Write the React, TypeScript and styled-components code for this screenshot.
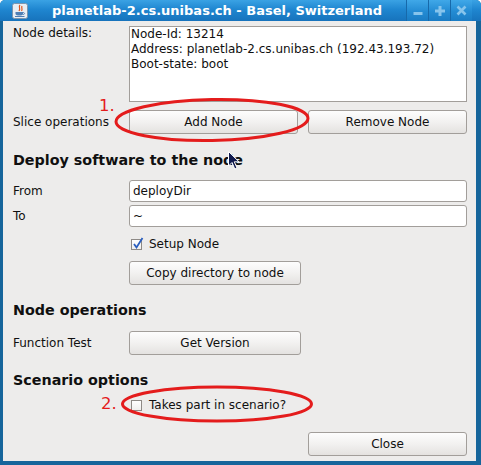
import styled, { createGlobalStyle } from 'styled-components';

const GlobalStyle = createGlobalStyle`
  html, body { margin: 0; padding: 0; background: #ffffff; }
  body { font-family: 'DejaVu Sans', 'Liberation Sans', sans-serif; font-size: 12px; color: #101010; }
`;

const Frame = styled.div`
  position: relative;
  width: 481px;
  height: 465px;
  background: #16659b;
  border-radius: 5px 5px 0 0;
  display: flex;
  flex-direction: column;
  overflow: hidden;
`;

const TitleBar = styled.div`
  height: 21px;
  flex: none;
  display: flex;
  align-items: stretch;
  background: linear-gradient(#3aa2e4 0%, #1f86d0 45%, #1773bc 100%);
  padding-left: 12px;
  padding-right: 9px;
`;

const AppIcon = styled.div`
  width: 16px;
  display: flex;
  align-items: center;
`;

const Title = styled.div`
  flex: 1;
  display: flex;
  align-items: center;
  justify-content: center;
  color: #ffffff;
  font-weight: bold;
  font-size: 13px;
  white-space: nowrap;
`;

const WinButtons = styled.div`
  display: flex;
`;

const WinButton = styled.div`
  width: 21px;
  display: flex;
  align-items: center;
  justify-content: center;
  background: linear-gradient(#40a8e8, #238bd3 55%, #1a7cc4);
  border-left: 1px solid #1769aa;
  color: #86c4ec;
`;

const Body = styled.div`
  flex: 1;
  margin: 0 5px 4px 3px;
  background: #edeceb;
  padding: 5px 9px 0 10px;
  display: flex;
  flex-direction: column;
`;

const Row = styled.div<{ $top?: number; $align?: string }>`
  display: grid;
  grid-template-columns: 116px 1fr;
  align-items: ${(p) => p.$align ?? 'center'};
  margin-top: ${(p) => p.$top ?? 0}px;
`;

const Label = styled.div`
  white-space: nowrap;
  line-height: 15px;
`;

const Details = styled.div`
  height: 74px;
  background: #ffffff;
  border: 1px solid #a29e9a;
  padding: 0 1px;
  line-height: 15px;
  white-space: nowrap;
`;

const Heading = styled.div<{ $top: number }>`
  font-weight: bold;
  font-size: 14.3px;
  line-height: 18px;
  margin-top: ${(p) => p.$top}px;
  white-space: nowrap;
`;

const Buttons = styled.div`
  display: flex;
  gap: 10px;
`;

const Button = styled.button<{ $w: number }>`
  width: ${(p) => p.$w}px;
  height: 24px;
  padding: 0;
  font-family: inherit;
  font-size: 12px;
  color: #101010;
  border: 1px solid #a29e9a;
  border-radius: 3px;
  background: linear-gradient(#fdfdfd, #f2f1f0 50%, #e4e2e0);
`;

const Field = styled.div`
  height: 20px;
  background: #ffffff;
  border: 1px solid #a29e9a;
  border-radius: 3px;
  padding-left: 3px;
  display: flex;
  align-items: center;
`;

const CheckRow = styled.label`
  display: flex;
  align-items: center;
  gap: 7px;
  line-height: 16px;
  padding-left: 2px;
`;

const Box = styled.span`
  width: 9px;
  height: 9px;
  border: 1px solid #8e8a86;
  background: linear-gradient(#ffffff, #f0efee);
  position: relative;
  display: inline-block;
  margin-top: 1px;
`;

const Tick = styled.svg`
  position: absolute;
  left: 0;
  top: -3px;
`;

const Footer = styled.div`
  display: flex;
  justify-content: flex-end;
  margin-top: 19px;
`;

const Marks = styled.svg`
  position: absolute;
  left: 0;
  top: 0;
  pointer-events: none;
`;

const Number = styled.span<{ $x: number; $y: number }>`
  position: absolute;
  left: ${(p) => p.$x}px;
  top: ${(p) => p.$y}px;
  font-size: 16.5px;
  line-height: 16.5px;
  color: #e41c1c;
`;

const Cursor = styled.svg`
  position: absolute;
  left: 228px;
  top: 151px;
`;

function CheckBox({ checked }: { checked?: boolean }) {
  return (
    <Box>
      {checked && (
        <Tick width="13" height="13" viewBox="0 0 13 13">
          <path d="M2 7 L4.5 10.5 L10.5 1" fill="none" stroke="#2b5fbf" strokeWidth="1.8" />
        </Tick>
      )}
    </Box>
  );
}

export default function App() {
  return (
    <>
      <GlobalStyle />
      <Frame>
        <TitleBar>
          <AppIcon>
            <svg width="16" height="16" viewBox="0 0 16 16">
              <rect x="0.5" y="0.5" width="15" height="15" rx="2" fill="#e9eef3" stroke="#7c95ad" />
              <path d="M8 2 C6 4 9 5 7 8 M10 3 C9 5 11 6 9.5 8" fill="none" stroke="#e0561b" strokeWidth="1.2" />
              <path d="M3.5 9 H11 V11 C11 13 4 13 3.5 11 Z" fill="#4f7fb5" />
              <path d="M11 9.5 C13 9.5 13 11.5 11 11.5" fill="none" stroke="#4f7fb5" strokeWidth="1" />
              <path d="M3 13.5 H12.5" stroke="#4f7fb5" strokeWidth="1" />
            </svg>
          </AppIcon>
          <Title>planetlab-2.cs.unibas.ch - Basel, Switzerland</Title>
          <WinButtons>
            <WinButton>
              <svg width="10" height="10" viewBox="0 0 10 10">
                <rect x="0.5" y="6" width="9" height="3" fill="currentColor" />
              </svg>
            </WinButton>
            <WinButton>
              <svg width="10" height="10" viewBox="0 0 10 10">
                <path d="M3.5 0 H6.5 V3.5 H10 V6.5 H6.5 V10 H3.5 V6.5 H0 V3.5 H3.5 Z" fill="currentColor" />
              </svg>
            </WinButton>
            <WinButton>
              <svg width="11" height="11" viewBox="0 0 11 11">
                <path d="M1.5 1.5 L9.5 9.5 M9.5 1.5 L1.5 9.5" stroke="currentColor" strokeWidth="2.6" />
              </svg>
            </WinButton>
          </WinButtons>
        </TitleBar>
        <Body>
          <Row $align="start">
            <Label>Node details:</Label>
            <Details>
              Node-Id: 13214
              <br />
              Address: planetlab-2.cs.unibas.ch (192.43.193.72)
              <br />
              Boot-state: boot
            </Details>
          </Row>
          <Row $top={8}>
            <Label>Slice operations</Label>
            <Buttons>
              <Button $w={169}>Add Node</Button>
              <Button $w={159}>Remove Node</Button>
            </Buttons>
          </Row>

          <Heading $top={17}>Deploy software to the node</Heading>
          <Row $top={11}>
            <Label>From</Label>
            <Field>deployDir</Field>
          </Row>
          <Row $top={3}>
            <Label>To</Label>
            <Field>~</Field>
          </Row>
          <Row $top={9}>
            <span />
            <CheckRow>
              <CheckBox checked />
              Setup Node
            </CheckRow>
          </Row>
          <Row $top={9}>
            <span />
            <Button $w={172}>Copy directory to node</Button>
          </Row>

          <Heading $top={16}>Node operations</Heading>
          <Row $top={12}>
            <Label>Function Test</Label>
            <Button $w={172}>Get Version</Button>
          </Row>

          <Heading $top={16}>Scenario options</Heading>
          <Row $top={8}>
            <span />
            <CheckRow>
              <CheckBox />
              Takes part in scenario?
            </CheckRow>
          </Row>
          <Footer>
            <Button $w={159}>Close</Button>
          </Footer>
        </Body>

        <Marks width="481" height="465" viewBox="0 0 481 465">
          <ellipse cx="212" cy="120" rx="96" ry="20.5" fill="none" stroke="#e41c1c" strokeWidth="3" transform="rotate(-1 212 120)" />
          <ellipse cx="217" cy="404" rx="94.5" ry="17" fill="none" stroke="#e41c1c" strokeWidth="3" />
        </Marks>
        <Number $x={99} $y={98}>1.</Number>
        <Number $x={101} $y={396}>2.</Number>
        <Cursor width="12" height="20" viewBox="0 0 12 20">
          <path d="M0.5 0.5 L0.5 15 L4 11.5 L6.8 18 L9 17 L6.3 10.8 L11 10.8 Z" fill="#111a4d" stroke="#ffffff" strokeWidth="1" />
        </Cursor>
      </Frame>
    </>
  );
}
